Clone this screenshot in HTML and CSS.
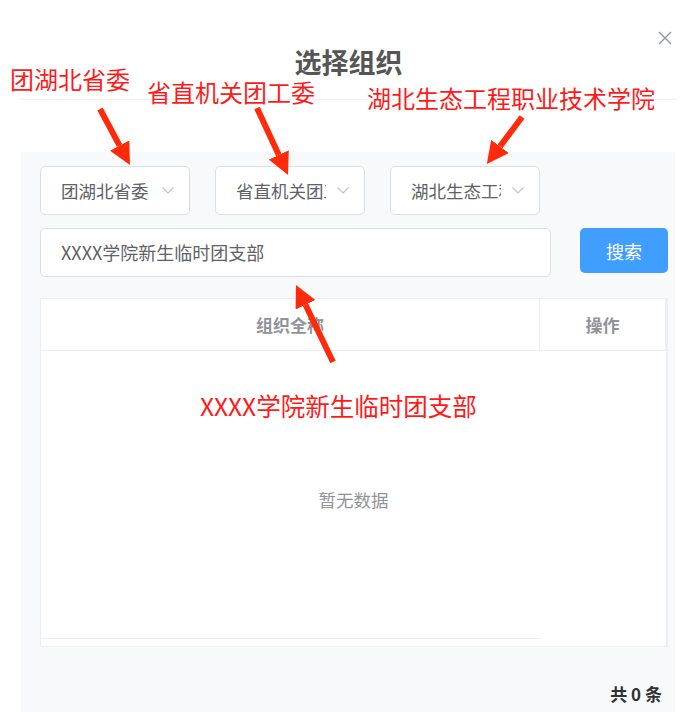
FILE: index.html
```html
<!DOCTYPE html>
<html lang="zh-CN">

<head>
    <meta charset="UTF-8">
    <meta name="viewport" content="width=device-width, initial-scale=1.0">
    <title>选择组织</title>
    <link rel="stylesheet" href="styles.css">
</head>

<body>
    <div class="dialog">
        <div class="dialog-header">
            <span class="dialog-title">选择组织</span>
            <button class="dialog-close" aria-label="关闭">
                <svg width="14" height="14" viewBox="0 0 14 14">
                    <path d="M1 1L13 13M13 1L1 13" stroke="#909399" stroke-width="1.3" fill="none" />
                </svg>
            </button>
        </div>

        <div class="dialog-body">
            <div class="panel">
                <div class="select-row">
                    <div class="select">
                        <span class="select-text">团湖北省委</span>
                        <svg class="chevron" width="12" height="7" viewBox="0 0 12 7">
                            <polyline points="0.5,0.5 6,6 11.5,0.5" stroke="#c0c4cc" stroke-width="1.2" fill="none" />
                        </svg>
                    </div>
                    <div class="select">
                        <span class="select-text">省直机关团工委</span>
                        <svg class="chevron" width="12" height="7" viewBox="0 0 12 7">
                            <polyline points="0.5,0.5 6,6 11.5,0.5" stroke="#c0c4cc" stroke-width="1.2" fill="none" />
                        </svg>
                    </div>
                    <div class="select">
                        <span class="select-text">湖北生态工程职业技术学院</span>
                        <svg class="chevron" width="12" height="7" viewBox="0 0 12 7">
                            <polyline points="0.5,0.5 6,6 11.5,0.5" stroke="#c0c4cc" stroke-width="1.2" fill="none" />
                        </svg>
                    </div>
                </div>

                <div class="search-row">
                    <div class="input">XXXX学院新生临时团支部</div>
                    <button class="btn-search">搜索</button>
                </div>

                <div class="table">
                    <div class="table-head">
                        <div class="th th-name">组织全称</div>
                        <div class="th th-op">操作</div>
                    </div>
                    <div class="table-body">
                        <div class="table-empty">暂无数据</div>
                        <div class="table-foot">
                            <div class="fixed-line"></div>
                        </div>
                    </div>
                </div>

                <div class="pager">共 0 条</div>
            </div>
        </div>
    </div>

    <!-- 标注层 -->
    <div class="notes">
        <svg class="arrows" width="696" height="712" viewBox="0 0 696 712">
            <defs>
                <marker id="head" viewBox="0 0 22 22" refX="0" refY="11" markerWidth="22" markerHeight="22" markerUnits="userSpaceOnUse" orient="auto">
                    <path d="M0 0L22 11L0 22z" fill="#ff2a0a" />
                </marker>
            </defs>
            <line x1="100" y1="109" x2="119.6" y2="145.6" marker-end="url(#head)" />
            <line x1="257" y1="108" x2="278.8" y2="155" marker-end="url(#head)" />
            <line x1="522" y1="117" x2="500" y2="146.4" marker-end="url(#head)" />
            <line x1="333" y1="362" x2="305.5" y2="304.8" marker-end="url(#head)" />
        </svg>
        <span class="note note-1">团湖北省委</span>
        <span class="note note-2">省直机关团工委</span>
        <span class="note note-3">湖北生态工程职业技术学院</span>
        <span class="note note-4">XXXX学院新生临时团支部</span>
    </div>
</body>

</html>
```

FILE: styles.css
```css
html,
body {
    margin: 0;
    height: 100%;
    overflow: hidden;
}

body {
    position: relative;
    width: 696px;
    height: 712px;
    background: #fff;
    font-family: "Noto Sans CJK SC", "Noto Sans", sans-serif;
    color: #606266;
}

/* 弹窗头部 */

.dialog-header {
    position: relative;
    height: 100px;
    margin: 0 19px 0 20px;
    border-bottom: 1px solid #f0f1f3;
    box-sizing: border-box;
    text-align: center;
}

.dialog-title {
    display: inline-block;
    margin-top: 47px;
    font-size: 27px;
    line-height: 30px;
    font-weight: bold;
    color: #555;
}

.dialog-close {
    position: absolute;
    top: 31px;
    right: 5px;
    padding: 0;
    border: none;
    background: none;
    line-height: 0;
    cursor: pointer;
}

.dialog-body {
    padding: 52px 21px 0 21px;
}

.panel {
    background: #f7f9fb;
    padding: 14px 7px 0 19px;
    height: 560px;
    box-sizing: border-box;
}

/* 级联下拉 */

.select-row {
    display: flex;
    gap: 25px;
}

.select {
    display: flex;
    align-items: center;
    gap: 11px;
    width: 150px;
    height: 49px;
    padding: 0 15px 0 20px;
    box-sizing: border-box;
    background: #fff;
    border: 1px solid #dcdfe6;
    border-radius: 5px;
}

.select-text {
    width: 92px;
    overflow: hidden;
    white-space: nowrap;
    font-size: 17.5px;
    color: #606266;
}

.chevron {
    flex: none;
}

/* 搜索 */

.search-row {
    display: flex;
    align-items: flex-start;
    gap: 29px;
    margin-top: 13px;
}

.input {
    width: 512px;
    height: 49px;
    box-sizing: border-box;
    padding-left: 20px;
    background: #fff;
    border: 1px solid #dcdfe6;
    border-radius: 5px;
    font-size: 18px;
    line-height: 47px;
    color: #606266;
}

.btn-search {
    width: 88px;
    height: 45px;
    border: none;
    border-radius: 5px;
    background: #409eff;
    color: #fff;
    font-family: inherit;
    font-size: 18px;
    cursor: pointer;
}

/* 表格 */

.table {
    margin-top: 21px;
    width: 628px;
    height: 349px;
    box-sizing: border-box;
    background: #fff;
    border: 1px solid #ebeef5;
    border-right-width: 2px;
}

.table-head {
    display: flex;
    height: 51px;
    border-bottom: 1px solid #ebeef5;
}

.th {
    display: flex;
    align-items: center;
    justify-content: center;
    font-size: 17px;
    font-weight: bold;
    color: #909399;
}

.th-name {
    width: 499px;
    border-right: 1px solid #ebeef5;
}

.th-op {
    width: 125px;
    border-right: 1px solid #ebeef5;
}

.table-empty {
    height: 278px;
    padding-top: 9px;
    display: flex;
    align-items: center;
    justify-content: center;
    font-size: 17.5px;
    color: #909399;
}

.fixed-line {
    width: 500px;
    border-top: 1px solid #ebeef5;
}

.pager {
    margin-top: 34px;
    padding-right: 6px;
    text-align: right;
    font-size: 17px;
    font-weight: bold;
    color: #303133;
}

/* 标注 */

.notes {
    position: absolute;
    left: 0;
    top: 0;
    width: 696px;
    height: 712px;
    pointer-events: none;
}

.arrows {
    position: absolute;
    left: 0;
    top: 0;
}

.arrows line {
    stroke: #ff2a0a;
    stroke-width: 6;
}

.note {
    position: absolute;
    font-size: 24px;
    line-height: 24px;
    color: #ff1a1a;
    white-space: nowrap;
}

.note-1 {
    left: 10px;
    top: 67px;
}

.note-2 {
    left: 147px;
    top: 80px;
}

.note-3 {
    left: 367px;
    top: 86px;
}

.note-4 {
    left: 200px;
    top: 394px;
    font-size: 24.5px;
    line-height: 24px;
}
```
